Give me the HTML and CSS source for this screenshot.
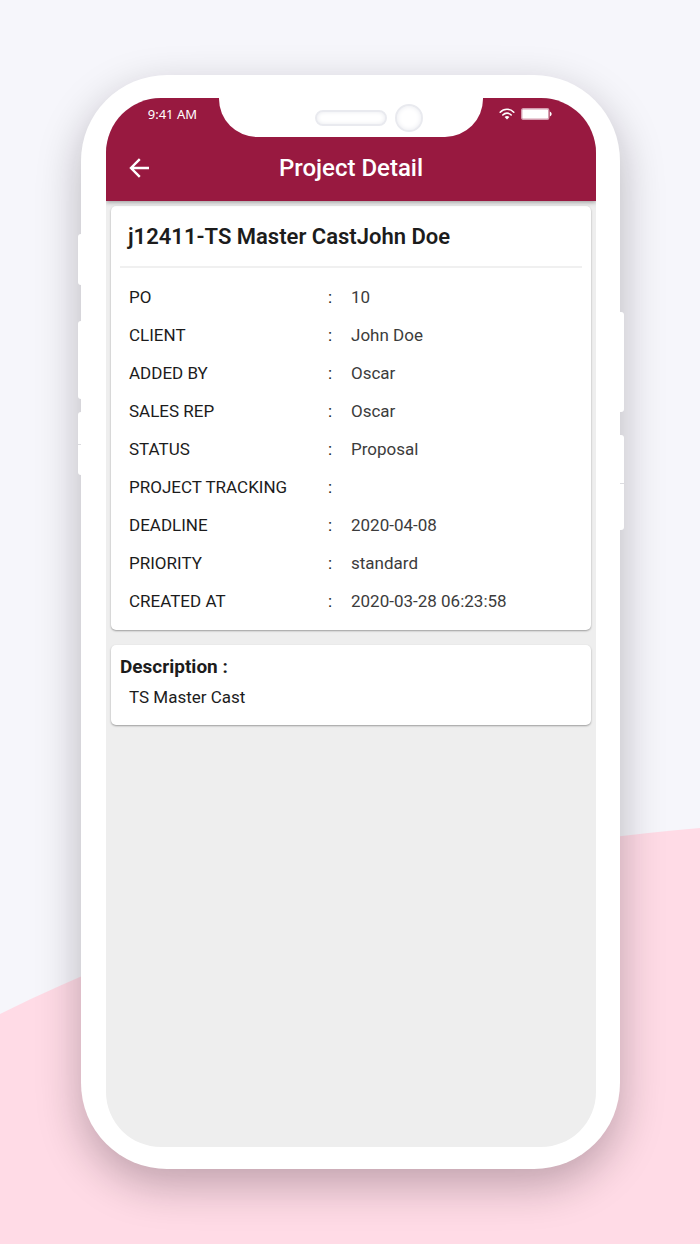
FILE: index.html
```html
<!DOCTYPE html>
<html lang="en">
<head>
<meta charset="UTF-8">
<meta name="viewport" content="width=device-width, initial-scale=1">
<title>Project Detail</title>
<link rel="stylesheet" href="styles.css">
</head>
<body>

<div class="page">
    <svg class="page-bg" viewBox="0 0 700 1244" preserveAspectRatio="none" aria-hidden="true">
        <path d="M0 1014C200 915 430 851 700 828V1244H0Z" fill="#ffdbe6"/>
    </svg>

    <div class="phone">
        <!-- side keys -->
        <span class="key key-left key-mute"></span>
        <span class="key key-left key-up"></span>
        <span class="key key-left key-down"></span>
        <span class="key key-right key-power"></span>
        <span class="key key-right key-side"></span>

        <div class="screen">
            <header class="header">
                <div class="status-bar">
                    <span class="time">9:41 AM</span>
                    <div class="notch">
                        <span class="speaker"></span>
                        <span class="camera"></span>
                    </div>
                    <div class="status-icons">
                        <svg width="16" height="12" viewBox="0 0 16 12" fill="none" stroke="#fff" stroke-width="1.6" stroke-linecap="round">
                            <path d="M1.2 4.2C5 .2 11 .2 14.8 4.2"/>
                            <path d="M3.8 7C6.2 4.5 9.8 4.5 12.2 7"/>
                            <path d="M5.6 9.1C7 7.7 9 7.7 10.4 9.1L8 11.6Z" fill="#fff" stroke="none"/>
                        </svg>
                        <svg width="31" height="12" viewBox="0 0 31 12">
                            <rect x="0.7" y="0.7" width="27" height="10.6" rx="1.5" fill="#fff" stroke="#d59db0" stroke-width="1.4"/>
                            <path d="M28.8 3.6C31.2 4.4 31.2 7.6 28.8 8.4Z" fill="#fff"/>
                        </svg>
                    </div>
                </div>
                <div class="app-bar">
                    <button class="back" type="button" aria-label="Back">
                        <svg width="20" height="20" viewBox="0 0 20 20" fill="none" stroke="#fff" stroke-width="2.4">
                            <path d="M20 10H2M10.8 1.2L2 10L10.8 18.8"/>
                        </svg>
                    </button>
                    <h1>Project Detail</h1>
                </div>
            </header>

            <main class="content">
                <section class="card">
                    <h2 class="project-name">j12411-TS Master CastJohn Doe</h2>
                    <table class="details">
                        <tr><th scope="row">PO</th><td class="colon">:</td><td>10</td></tr>
                        <tr><th scope="row">CLIENT</th><td class="colon">:</td><td>John Doe</td></tr>
                        <tr><th scope="row">ADDED BY</th><td class="colon">:</td><td>Oscar</td></tr>
                        <tr><th scope="row">SALES REP</th><td class="colon">:</td><td>Oscar</td></tr>
                        <tr><th scope="row">STATUS</th><td class="colon">:</td><td>Proposal</td></tr>
                        <tr><th scope="row">PROJECT TRACKING</th><td class="colon">:</td><td></td></tr>
                        <tr><th scope="row">DEADLINE</th><td class="colon">:</td><td>2020-04-08</td></tr>
                        <tr><th scope="row">PRIORITY</th><td class="colon">:</td><td>standard</td></tr>
                        <tr><th scope="row">CREATED AT</th><td class="colon">:</td><td>2020-03-28 06:23:58</td></tr>
                    </table>
                </section>

                <section class="card description">
                    <h3>Description :</h3>
                    <p>TS Master Cast</p>
                </section>
            </main>
        </div>
    </div>
</div>

</body>
</html>
```
FILE: styles.css
```css
* {
    box-sizing: border-box;
}
body {
    margin: 0;
    font-family: Roboto, "Liberation Sans", sans-serif;
    color: #1c1c1c;
    background-color: #f6f6fb;
}
h1, h2, h3, p {
    margin: 0;
}
.page {
    position: relative;
    display: flex;
    min-height: 100vh;
    padding: 75px 80px 75px 81px;
}
.page-bg {
    position: absolute;
    top: 0;
    left: 0;
    width: 100%;
    height: 100%;
}

/* phone */
.phone {
    position: relative;
    display: flex;
    flex: 1;
    padding: 23px 24px 22px 25px;
    background-color: #fff;
    border-radius: 86px;
    box-shadow: 0 16px 44px rgba(20, 10, 20, 0.28);
}
.key {
    position: absolute;
    width: 4px;
    background-color: #fff;
}
.key-left {
    left: -3px;
    border-radius: 3px 0 0 3px;
}
.key-right {
    right: -4px;
    border-radius: 0 3px 3px 0;
}
.key-mute {
    top: 159px;
    height: 51px;
}
.key-up {
    top: 246px;
    height: 78px;
}
.key-down {
    top: 337px;
    height: 63px;
}
.key-power {
    top: 237px;
    height: 100px;
}
.key-side {
    top: 360px;
    height: 95px;
}
.key-down::after,
.key-side::after {
    content: "";
    position: absolute;
    left: 0;
    width: 3px;
    height: 1px;
    background-color: #dcdce0;
}
.key-down::after {
    top: 32px;
}
.key-side::after {
    top: 48px;
    width: 4px;
}
.screen {
    flex: 1;
    overflow: hidden;
    background-color: #eee;
    border-radius: 55px;
}

/* header */
.header {
    position: relative;
    color: #fff;
    background-color: #981940;
    box-shadow: 0 1px 5px rgba(0, 0, 0, 0.4);
}
.status-bar {
    display: grid;
    grid-template-columns: 1fr 264px 1fr;
    height: 39px;
}
.time {
    padding-right: 22px;
    font-family: "Noto Sans", "Open Sans", sans-serif;
    font-size: 13px;
    line-height: 32px;
    text-align: right;
}
.notch {
    display: flex;
    justify-content: center;
    align-items: center;
    gap: 8px;
    padding-left: 36px;
    background-color: #fff;
    border-radius: 0 0 38px 38px;
}
.speaker {
    width: 72px;
    height: 16px;
    border: 2px solid #e9eaef;
    border-radius: 8px;
    box-shadow: inset 0 0 4px #e9eaef;
}
.camera {
    width: 28px;
    height: 28px;
    border: 2px solid #e9eaef;
    border-radius: 50%;
    box-shadow: inset 0 0 5px #e9eaef;
}
.status-icons {
    display: flex;
    align-items: center;
    gap: 6px;
    height: 32px;
    padding-left: 16px;
}
.app-bar {
    display: grid;
    grid-template-columns: 64px 1fr 64px;
    align-items: center;
    height: 64px;
    padding-bottom: 3px;
}
.back {
    display: flex;
    padding: 10px 20px 10px 23px;
    background: none;
    border: none;
    cursor: pointer;
}
.back svg {
    flex-shrink: 0;
}
.app-bar h1 {
    font-size: 24px;
    font-weight: 500;
    text-align: center;
}

/* cards */
.content {
    display: flex;
    flex-direction: column;
    gap: 15px;
    padding: 5px;
}
.card {
    padding: 0 9px 10px;
    background-color: #fff;
    border-radius: 5px;
    box-shadow: 0 1px 2px rgba(0, 0, 0, 0.35);
}
.project-name {
    padding: 2px 8px 0;
    font-size: 22px;
    font-weight: 600;
    line-height: 58px;
    border-bottom: 2px solid #f0f0f0;
}
.details {
    width: 100%;
    margin-top: 10px;
    border-collapse: collapse;
    table-layout: fixed;
}
.details th,
.details td {
    height: 38px;
    padding: 0;
    font-size: 17px;
    font-weight: 400;
    text-align: left;
}
.details th {
    width: 208px;
    padding-left: 9px;
}
.details td {
    color: #3c3c3c;
}
.details .colon {
    width: 23px;
    color: #1c1c1c;
}
.description {
    padding: 7px 9px 12px;
}
.description h3 {
    font-size: 19px;
    font-weight: 700;
    line-height: 30px;
}
.description p {
    padding-left: 9px;
    font-size: 17px;
    line-height: 31px;
}
```
